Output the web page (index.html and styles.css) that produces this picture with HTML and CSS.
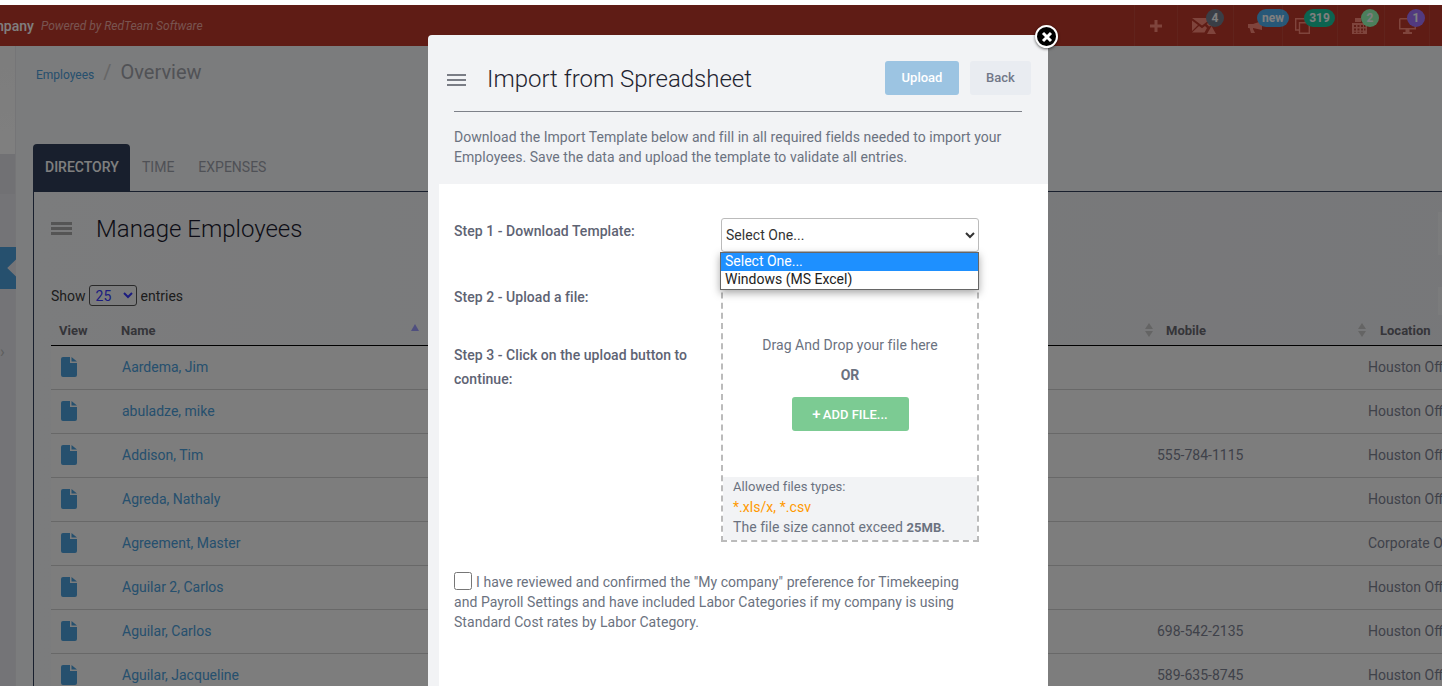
FILE: index.html
```html
<!DOCTYPE html>
<html lang="en">
<head>
<meta charset="UTF-8">
<meta name="viewport" content="width=device-width, initial-scale=1.0">
<title>Manage Employees</title>
<link rel="stylesheet" href="styles.css">
</head>
<body>

<header class="topbar">
    <div class="brand"><b>My Company</b><i>Powered by RedTeam Software</i></div>
    <nav class="topnav">
        <a class="nav-item nav-plus">
            <svg width="14" height="14" viewBox="0 0 14 14"><path d="M5.5 1h3v4.5H13v3H8.500V13h-3V8.500H1v-3h4.500z"/></svg>
        </a>
        <a class="nav-item nav-mail">
            <svg width="24" height="16" viewBox="0 0 24 16"><path d="M0 0h20L10 7.500zM0 2.500l6 4.500-6 6zM20 2.500v5l-3 1-2.500-2.500zM0 14.500l7-6.500 3 2.300 3-2.300 2 2-2.500 4.500z"/><path d="M19.500 8l4.500 8h-9z"/></svg>
            <span class="badge badge-dark">4</span>
        </a>
        <a class="nav-item nav-horn">
            <svg width="18" height="12" viewBox="0 0 18 12"><path d="M0 3h5l9-3v9L5 7v1l2 4H3L1.500 7H0z"/></svg>
            <span class="badge badge-blue">new</span>
        </a>
        <a class="nav-item nav-copy">
            <svg width="15" height="16" viewBox="0 0 15 16"><path fill="none" stroke-width="1.400" d="M4.500 4.700h9.800v10.600H4.500zM4.500 12H.7V.7h9.800v4"/></svg>
            <span class="badge badge-green">319</span>
        </a>
        <a class="nav-item nav-calc">
            <svg width="15" height="16" viewBox="0 0 15 16"><path d="M0 5h15v11H0zM2 7v2h2V7zm3.500 0v2h2V7zM9 7v2h2V7zm3 0v2h1.500V7zM2 10.500v2h2v-2zm3.500 0v2h2v-2zm3.500 0v2h2v-2zm3 0v2h1.500v-2zM2 13.800v1h2v-1zm3.500 0v1h2v-1zm3.500 0v1h2v-1zM3 0h6v4H3z"/></svg>
            <span class="badge badge-lime">2</span>
        </a>
        <a class="nav-item nav-screen">
            <svg width="17" height="16" viewBox="0 0 17 16"><path d="M1.500 0H17v11.500H0V1.500A1.500 1.500 0 0 1 1.500 0zM1.500 1.500v8.500h14V1.500zM6.500 11.500h4V14h2.500v2H4v-2h2.500z"/></svg>
            <span class="badge badge-purple">1</span>
        </a>
    </nav>
</header>

<div class="layout">
    <aside class="sidebar">
        <div class="side-top"></div>
        <div class="side-band"></div>
        <div class="side-toggle"></div>
        <div class="side-arrow">&#8250;</div>
    </aside>

    <main class="content">
        <div class="breadcrumb">
            <a href="#">Employees</a>
            <span class="slash">/</span>
            <span class="crumb-current">Overview</span>
        </div>

        <div class="tabs">
            <a class="tab active">DIRECTORY</a>
            <a class="tab">TIME</a>
            <a class="tab">EXPENSES</a>
        </div>

        <section class="card">
            <div class="card-title">
                <span class="burger"><i></i><i></i><i></i></span>
                <h2>Manage Employees</h2>
            </div>
            <div class="show-row">
                Show
                <select class="show-select"><option>25</option></select>
                entries
            </div>

            <table class="emp-table">
                <colgroup>
                    <col class="col-view"><col class="col-name"><col class="col-mid"><col class="col-mobile"><col class="col-loc">
                </colgroup>
                <thead>
                    <tr>
                        <th>View</th>
                        <th><div class="th-name">Name <span class="sort-up"></span></div></th>
                        <th></th>
                        <th><div class="th-sort"><span class="sort-both"></span>Mobile</div></th>
                        <th><div class="th-sort th-loc"><span class="sort-both"></span>Location</div></th>
                    </tr>
                </thead>
                <tbody>
                    <tr><td><svg class="doc" viewBox="0 0 16 20"><path d="M2 0h7v6h7v12a2 2 0 0 1-2 2H2a2 2 0 0 1-2-2V2a2 2 0 0 1 2-2zM10.500 0L16 4.500H10.500z"/></svg></td><td class="name"><a href="#">Aardema, Jim</a></td><td></td><td class="mobile"></td><td>Houston Office</td></tr>
                    <tr><td><svg class="doc" viewBox="0 0 16 20"><path d="M2 0h7v6h7v12a2 2 0 0 1-2 2H2a2 2 0 0 1-2-2V2a2 2 0 0 1 2-2zM10.500 0L16 4.500H10.500z"/></svg></td><td class="name"><a href="#">abuladze, mike</a></td><td></td><td class="mobile"></td><td>Houston Office</td></tr>
                    <tr><td><svg class="doc" viewBox="0 0 16 20"><path d="M2 0h7v6h7v12a2 2 0 0 1-2 2H2a2 2 0 0 1-2-2V2a2 2 0 0 1 2-2zM10.500 0L16 4.500H10.500z"/></svg></td><td class="name"><a href="#">Addison, Tim</a></td><td></td><td class="mobile">555-784-1115</td><td>Houston Office</td></tr>
                    <tr><td><svg class="doc" viewBox="0 0 16 20"><path d="M2 0h7v6h7v12a2 2 0 0 1-2 2H2a2 2 0 0 1-2-2V2a2 2 0 0 1 2-2zM10.500 0L16 4.500H10.500z"/></svg></td><td class="name"><a href="#">Agreda, Nathaly</a></td><td></td><td class="mobile"></td><td>Houston Office</td></tr>
                    <tr><td><svg class="doc" viewBox="0 0 16 20"><path d="M2 0h7v6h7v12a2 2 0 0 1-2 2H2a2 2 0 0 1-2-2V2a2 2 0 0 1 2-2zM10.500 0L16 4.500H10.500z"/></svg></td><td class="name"><a href="#">Agreement, Master</a></td><td></td><td class="mobile"></td><td>Corporate Office</td></tr>
                    <tr><td><svg class="doc" viewBox="0 0 16 20"><path d="M2 0h7v6h7v12a2 2 0 0 1-2 2H2a2 2 0 0 1-2-2V2a2 2 0 0 1 2-2zM10.500 0L16 4.500H10.500z"/></svg></td><td class="name"><a href="#">Aguilar 2, Carlos</a></td><td></td><td class="mobile"></td><td>Houston Office</td></tr>
                    <tr><td><svg class="doc" viewBox="0 0 16 20"><path d="M2 0h7v6h7v12a2 2 0 0 1-2 2H2a2 2 0 0 1-2-2V2a2 2 0 0 1 2-2zM10.500 0L16 4.500H10.500z"/></svg></td><td class="name"><a href="#">Aguilar, Carlos</a></td><td></td><td class="mobile">698-542-2135</td><td>Houston Office</td></tr>
                    <tr><td><svg class="doc" viewBox="0 0 16 20"><path d="M2 0h7v6h7v12a2 2 0 0 1-2 2H2a2 2 0 0 1-2-2V2a2 2 0 0 1 2-2zM10.500 0L16 4.500H10.500z"/></svg></td><td class="name"><a href="#">Aguilar, Jacqueline</a></td><td></td><td class="mobile">589-635-8745</td><td>Houston Office</td></tr>
                </tbody>
            </table>
        </section>
    </main>
</div>

<div class="edge-box edge-box-top"></div>
<div class="edge-box edge-box-low"></div>

<div class="overlay"></div>

<div class="modal">
    <div class="modal-head">
        <div class="modal-title-row">
            <span class="burger burger-small"><i></i><i></i><i></i></span>
            <h3>Import from Spreadsheet</h3>
            <button class="btn btn-upload">Upload</button>
            <button class="btn btn-back">Back</button>
        </div>
        <p class="modal-intro">Download the Import Template below and fill in all required fields needed to import your Employees. Save the data and upload the template to validate all entries.</p>
    </div>

    <div class="modal-body">
        <div class="steps">
            <div class="step-labels">
                <label class="step step-1">Step 1 - Download Template:</label>
                <label class="step step-2">Step 2 - Upload a file:</label>
                <label class="step step-3">Step 3 - Click on the upload button to continue:</label>
            </div>
            <div class="step-fields">
                <select class="tpl-select"><option>Select One...</option></select>
                <div class="tpl-menu">
                    <div class="tpl-option selected">Select One...</div>
                    <div class="tpl-option">Windows (MS Excel)</div>
                </div>
                <div class="dropzone">
                    <div class="drop-text">Drag And Drop your file here</div>
                    <div class="drop-or">OR</div>
                    <button class="btn-add"><span class="add-plus">+</span> ADD FILE...</button>
                    <div class="drop-info">
                        <div class="info-title">Allowed files types:</div>
                        <div class="info-types">*.xls/x, *.csv</div>
                        <div>The file size cannot exceed <b>25MB.</b></div>
                    </div>
                </div>
            </div>
        </div>
        <label class="confirm"><input type="checkbox" class="confirm-box">I have reviewed and confirmed the "My company" preference for Timekeeping and Payroll Settings and have included Labor Categories if my company is using Standard Cost rates by Labor Category.</label>
    </div>
</div>

<button class="modal-close">
    <svg width="12" height="12" viewBox="0 0 12 12"><path d="M2 2l8 8M10 2l-8 8"/></svg>
</button>

</body>
</html>
```

FILE: styles.css
```css
/* General */
html, body {
    height: 100%;
}
body {
    margin: 0;
    padding-top: 5px;
    box-sizing: border-box;
    height: 686px;
    overflow: hidden;
    position: relative;
    background-color: #fff;
    font-family: Roboto, "Liberation Sans", sans-serif;
    font-size: 14px;
    color: #6b7280;
}
a {
    color: #4ca0dc;
    text-decoration: none;
}

/* Top bar */
.topbar {
    display: flex;
    justify-content: space-between;
    height: 41px;
    background-color: #be382a;
}
.brand {
    display: flex;
    align-items: center;
    margin-left: -48px;
    white-space: nowrap;
}
.brand b {
    font-size: 14px;
    font-weight: 500;
    color: #fff;
}
.brand i {
    margin-left: 7px;
    font-size: 12px;
    color: #f0a8a0;
}
.topnav {
    display: flex;
    padding-right: 12px;
}
.nav-item {
    display: flex;
    align-items: center;
    justify-content: center;
    position: relative;
    box-sizing: border-box;
    height: 100%;
    border-left: 1px solid rgba(255, 255, 255, 0.07);
}
.nav-item:last-child {
    border-right: 1px solid rgba(255, 255, 255, 0.07);
}
.nav-item svg {
    fill: #ff8878;
    stroke: #ff8878;
    stroke-width: 0;
}
.nav-plus { width: 43px; }
.nav-mail { width: 56px; padding-right: 4px; }
.nav-horn { width: 49px; padding: 3px 2px 0 0; }
.nav-copy { width: 55px; padding-right: 15px; }
.nav-calc { width: 47px; padding-right: 3px; }
.nav-screen { width: 46px; }
.nav-copy svg {
    stroke-width: 1.4;
    fill: none;
}
.badge {
    position: absolute;
    top: 4px;
    height: 18px;
    border-radius: 9px;
    font-size: 12px;
    font-weight: 700;
    line-height: 18px;
    text-align: center;
    color: #fff;
}
.badge-dark { left: 28px; width: 18px; background-color: #747c8c; }
.badge-blue { left: 23px; width: 32px; background-color: #4fb0f0; }
.badge-green { left: 21px; width: 31px; background-color: #18c8a0; }
.badge-lime { left: 23px; width: 18px; background-color: #98ffb8; }
.badge-purple { left: 22px; width: 18px; background-color: #a474ff; }

/* Layout */
.layout {
    display: flex;
}
.sidebar {
    flex: 0 0 15px;
    height: 640px;
    position: relative;
    background-color: #e8e9ee;
    border-right: 1px solid #eaebef;
}
.side-top {
    height: 108px;
    background: linear-gradient(#fafafa, #ffffff);
}
.side-band {
    height: 40px;
    background-color: #e2e3e8;
}
.side-toggle {
    position: absolute;
    top: 201px;
    left: 0;
    width: 16px;
    height: 42px;
    background-color: #4ca0dc;
    clip-path: polygon(0 0, 100% 0, 100% 30%, 45% 50%, 100% 70%, 100% 100%, 0 100%);
}
.side-arrow {
    position: absolute;
    top: 296px;
    left: 0;
    font-size: 16px;
    color: #bbb;
}
.content {
    flex: 1;
    min-width: 0;
    padding: 14px 0 0 17px;
    background-color: #f7f8fa;
}
.edge-box {
    position: absolute;
    left: 1438px;
    width: 4px;
    background-color: rgba(255, 255, 255, 0.5);
}
.edge-box-top { top: 212px; height: 43px; }
.edge-box-low { top: 287px; height: 28px; }

/* Breadcrumb */
.breadcrumb {
    display: flex;
    align-items: baseline;
    height: 24px;
    padding-left: 3px;
    line-height: 24px;
}
.breadcrumb a {
    font-size: 12px;
}
.slash {
    margin: 0 9px 0 9px;
    font-size: 20px;
    color: #ccc;
}
.crumb-current {
    font-size: 20px;
    color: #a2a5ac;
}

/* Tabs */
.tabs {
    display: flex;
    margin-top: 60px;
}
.tab {
    padding: 0 12px;
    height: 47px;
    line-height: 47px;
    color: #9fa3ad;
}
.tab.active {
    box-sizing: border-box;
    width: 97px;
    background-color: #303f5a;
    border-radius: 4px 4px 0 0;
    font-weight: 500;
    white-space: nowrap;
    color: #fff;
}

/* Card */
.card {
    width: 1500px;
    padding: 21px 0 0 17px;
    border-top: 1px solid #303f5a;
    border-left: 1px solid #303f5a;
    background: linear-gradient(to right, #f7f8fa, #eeeff3);
    height: 500px;
}
.card-title {
    display: flex;
    align-items: center;
    height: 32px;
}
.card-title h2 {
    margin: 0 0 0 24px;
    font-size: 24px;
    font-weight: 300;
    color: #1a1a2e;
}
.burger {
    display: block;
    width: 21px;
}
.burger i {
    display: block;
    height: 3px;
    margin-bottom: 2px;
    background-color: #aaa;
}
.burger-small {
    width: 19px;
}
.burger-small i {
    height: 2px;
    margin-bottom: 3px;
    background-color: #7a7d85;
}
.show-row {
    display: flex;
    align-items: center;
    gap: 4px;
    height: 21px;
    margin-top: 40px;
    padding-bottom: 1px;
    color: #3b3b3b;
}
.show-select {
    width: 48px;
    height: 21px;
    margin-left: -1px;
    padding: 0 0 0 2px;
    font-family: inherit;
    font-size: 14px;
    color: #3838ff;
    background-color: #fff0;
    border: 1px solid #555;
    border-radius: 3px;
}

/* Table */
.emp-table {
    table-layout: fixed;
    width: 1457px;
    margin-top: 8px;
    border-collapse: collapse;
}
.col-view { width: 62px; }
.col-name { width: 312px; }
.col-mid { width: 720px; }
.col-mobile { width: 213px; }
.col-loc { width: 150px; }
.emp-table th {
    height: 30px;
    padding: 0 0 0 8px;
    border-bottom: 1px solid #000;
    font-size: 13px;
    font-weight: 700;
    text-align: left;
    color: #6a6a72;
    white-space: nowrap;
}
.emp-table td {
    box-sizing: border-box;
    height: 44px;
    padding: 0 0 2px 10px;
    border-bottom: 1px solid #d0d0d0;
    background-color: #fafafa;
    color: #7f8494;
    white-space: nowrap;
    overflow: hidden;
}
.emp-table td.mobile {
    padding-left: 12px;
}
.emp-table td.name {
    padding-left: 9px;
}
.th-name {
    display: flex;
    justify-content: space-between;
    align-items: center;
    padding-right: 6px;
}
.th-sort {
    display: flex;
    align-items: center;
    gap: 12px;
    margin-left: -8px;
}
.th-loc {
    gap: 13px;
}
.sort-up {
    width: 0;
    height: 0;
    margin-top: -5px;
    border-left: 4px solid transparent;
    border-right: 4px solid transparent;
    border-bottom: 7px solid #9e9eff;
}
.sort-both {
    position: relative;
    width: 9px;
    height: 14px;
}
.sort-both:before,
.sort-both:after {
    content: "";
    position: absolute;
    left: 0;
    border-left: 4.5px solid transparent;
    border-right: 4.5px solid transparent;
}
.sort-both:before {
    top: 0;
    border-bottom: 6px solid #c8c8c8;
}
.sort-both:after {
    bottom: 0;
    border-top: 6px solid #c8c8c8;
}
.doc {
    display: block;
    width: 16px;
    height: 20px;
    fill: #4ca0dc;
}

/* Overlay and modal */
.overlay {
    position: absolute;
    inset: 0 0 0 0;
    top: 5px;
    background-color: rgba(0, 0, 0, 0.5);
}
.modal {
    position: absolute;
    top: 35px;
    left: 428px;
    width: 620px;
    height: 660px;
    border-radius: 4px 4px 0 0;
    background-color: #f2f3f5;
    letter-spacing: 0.05px;
}
.modal-head {
    padding: 26px 26px 17px 26px;
}
.modal-title-row {
    display: flex;
    align-items: center;
    height: 34px;
    padding-bottom: 16px;
    border-bottom: 1px solid #7e8189;
}
.modal-title-row .burger {
    margin-left: -7px;
    margin-top: 6px;
}
.modal-title-row h3 {
    flex: 1;
    margin: 2px 0 0 21px;
    font-size: 24px;
    font-weight: 300;
    letter-spacing: 0;
    color: #1f2430;
}
.btn {
    height: 34px;
    padding: 0 0 2px 0;
    border: none;
    border-radius: 3px;
    font-family: inherit;
    font-size: 13px;
    font-weight: 500;
    letter-spacing: 0;
}
.btn-upload {
    width: 74px;
    background-color: #9cc4e2;
    color: #fff;
}
.btn-back {
    width: 61px;
    margin: 0 -9px 0 11px;
    background-color: #e9ecf1;
    color: #727888;
}
.modal-intro {
    margin: 15px 0 0 0;
    line-height: 20px;
}
.modal-body {
    margin-left: 11px;
    height: 500px;
    padding: 34px 0 0 15px;
    background-color: #fff;
}
.steps {
    display: grid;
    grid-template-columns: 267px 258px;
}
.step {
    display: block;
    width: 250px;
    font-weight: 500;
    line-height: 24px;
    color: #5e6373;
}
.step-1 { margin-top: 1px; }
.step-2 { margin-top: 42px; }
.step-3 { margin-top: 34px; }
.step-fields {
    position: relative;
}
.tpl-select {
    display: block;
    width: 258px;
    height: 34px;
    padding: 0;
    border: 1px solid #bbb;
    border-radius: 3px;
    background-color: #fff;
    font-family: inherit;
    font-size: 14px;
    letter-spacing: 0.05px;
    color: #333;
}
.tpl-menu {
    position: absolute;
    top: 34px;
    left: -1px;
    width: 257px;
    border: 1px solid #666;
    background-color: #fff;
    box-shadow: 0 3px 8px rgba(0, 0, 0, 0.35);
    letter-spacing: 0;
    color: #222;
}
.tpl-option {
    height: 18px;
    padding-left: 4px;
    line-height: 16px;
}
.tpl-option.selected {
    background-color: #1e90ff;
    color: #fff;
}
.dropzone {
    display: flex;
    flex-direction: column;
    align-items: center;
    box-sizing: border-box;
    height: 290px;
    padding-top: 81px;
    border: 2px dashed #bbb;
    border-top-color: transparent;
}
.drop-text {
    line-height: 20px;
}
.drop-or {
    margin-top: 10px;
    font-weight: 700;
    line-height: 20px;
}
.btn-add {
    width: 117px;
    height: 34px;
    margin-top: 12px;
    padding: 0;
    border: none;
    border-radius: 3px;
    background-color: #7ccb93;
    color: #fff;
    font-family: inherit;
    font-size: 13px;
    font-weight: 500;
}
.add-plus {
    margin-right: -1px;
    font-size: 15px;
    line-height: 1;
}
.drop-info {
    align-self: stretch;
    margin-top: auto;
    padding: 2px 0 2px 10px;
    background-color: #f2f3f5;
    line-height: 20px;
}
.drop-info b {
    font-size: 13px;
}
.info-title {
    font-size: 13px;
    line-height: 16px;
    margin-bottom: 2px;
}
.info-types {
    color: #ff9900;
}
.confirm {
    display: block;
    width: 510px;
    margin-top: 30px;
    line-height: 20px;
}
.confirm-box {
    width: 18px;
    height: 18px;
    margin: 0 4px 0 0;
    vertical-align: -3px;
}
.modal-close {
    display: flex;
    align-items: center;
    justify-content: center;
    position: absolute;
    top: 25px;
    left: 1035px;
    box-sizing: border-box;
    width: 23px;
    height: 23px;
    padding: 0;
    border: 2px solid #fff;
    border-radius: 50%;
    background-color: #000;
    box-shadow: 0 1px 3px rgba(0, 0, 0, 0.6);
}
.modal-close svg {
    fill: none;
    stroke: #fff;
    stroke-width: 3;
}
```
